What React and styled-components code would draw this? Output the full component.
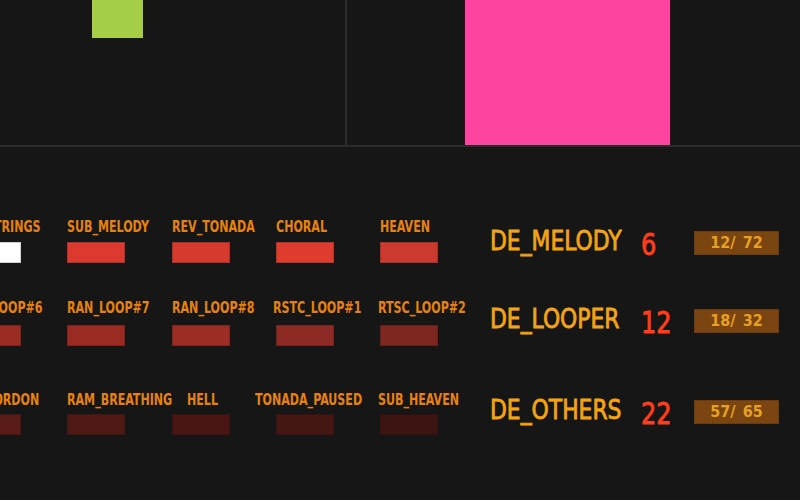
import React from "react";
import styled, { createGlobalStyle } from "styled-components";

const GlobalStyle = createGlobalStyle`
  html, body {
    margin: 0;
    padding: 0;
    background: #161616;
    overflow: hidden;
  }
`;

// slot rows: top offset, gap between label and pad, slots
const rows = [
  {
    top: 72,
    gap: 7,
    slots: [
      { name: "SUB_STRINGS", color: "#ffffff", shift: -8 },
      { name: "SUB_MELODY", color: "#dc3a2e" },
      { name: "REV_TONADA", color: "#d63a2f" },
      { name: "CHORAL", color: "#df3c30" },
      { name: "HEAVEN", color: "#cc3a2f" },
    ],
  },
  {
    top: 37,
    gap: 9,
    slots: [
      { name: "RAN_LOOP#6", color: "#9c2b23", shift: -3 },
      { name: "RAN_LOOP#7", color: "#9a2a22" },
      { name: "RAN_LOOP#8", color: "#9d2c24" },
      { name: "RSTC_LOOP#1", color: "#8d2a24", shift: -3 },
      { name: "RTSC_LOOP#2", color: "#7e2620", shift: -2 },
    ],
  },
  {
    top: 46,
    gap: 6,
    slots: [
      { name: "SUB_BORDON", color: "#5a1c18", shift: -9 },
      { name: "RAM_BREATHING", color: "#4f1a16" },
      { name: "HELL", color: "#491614", shift: 15 },
      { name: "TONADA_PAUSED", color: "#451614", shift: -21 },
      { name: "SUB_HEAVEN", color: "#3c1513", shift: -2 },
    ],
  },
];

const groups = [
  { name: "DE_MELODY", count: 6, used: 12, total: 72, top: 84 },
  { name: "DE_LOOPER", count: 12, used: 18, total: 32, top: 54 },
  { name: "DE_OTHERS", count: 22, used: 57, total: 65, top: 67 },
];

export default function App() {
  return (
    <Screen>
      <GlobalStyle />
      <Meters>
        <MeterPanel>
          <LevelBar $left={92} $width={51} $height={38} $color="#a5cd45" />
        </MeterPanel>
        <MeterPanel $grow>
          <LevelBar $left={118} $width={205} $height={145} $color="#fe449f" />
        </MeterPanel>
      </Meters>
      <Mixer>
        <Matrix>
          {rows.map((row, i) => (
            <SlotRow key={i} $top={row.top}>
              {row.slots.map((s) => (
                <Slot key={s.name}>
                  <SlotLabel $shift={s.shift || 0}>{s.name}</SlotLabel>
                  <SlotBox $gap={row.gap} $color={s.color} />
                </Slot>
              ))}
            </SlotRow>
          ))}
        </Matrix>
        <Summary>
          {groups.map((g) => (
            <GroupRow key={g.name} $top={g.top}>
              <GroupName>
                <Narrow $scale={0.9}>{g.name}</Narrow>
              </GroupName>
              <GroupCount>
                <Narrow $scale={0.86}>{g.count}</Narrow>
              </GroupCount>
              <Counter>
                {g.used}/ {g.total}
              </Counter>
            </GroupRow>
          ))}
        </Summary>
      </Mixer>
    </Screen>
  );
}

const Screen = styled.div`
  width: 800px;
  height: 500px;
  background: #161616;
  font-family: "DejaVu Sans Condensed", "Liberation Sans", sans-serif;
  overflow: hidden;
`;

const Meters = styled.div`
  display: flex;
  height: 145px;
  border-bottom: 2px solid #2c2c2c;
`;

const MeterPanel = styled.div`
  flex: ${(p) => (p.$grow ? 1 : "0 0 345px")};
  display: flex;
  align-items: flex-start;
  border-right: ${(p) => (p.$grow ? "none" : "2px solid #2c2c2c")};
`;

const LevelBar = styled.div`
  margin-left: ${(p) => p.$left}px;
  width: ${(p) => p.$width}px;
  height: ${(p) => p.$height}px;
  background: ${(p) => p.$color};
`;

const Mixer = styled.div`
  display: flex;
  align-items: flex-start;
`;

const Matrix = styled.div`
  display: flex;
  flex-direction: column;
  margin-left: -37px;
  width: 527px;
  flex-shrink: 0;
`;

const SlotRow = styled.div`
  display: flex;
  margin-top: ${(p) => p.$top}px;
`;

const Slot = styled.div`
  width: 104.33px;
  display: flex;
  flex-direction: column;
  align-items: flex-start;
`;

const SlotLabel = styled.div`
  margin-left: ${(p) => p.$shift}px;
  font-size: 16px;
  font-weight: bold;
  line-height: 16px;
  color: #e8820e;
  white-space: nowrap;
  transform: scaleX(0.77);
  transform-origin: left center;
`;

const SlotBox = styled.div`
  margin-top: ${(p) => p.$gap}px;
  width: 58px;
  height: 21px;
  background: ${(p) => p.$color};
  box-shadow: inset 0 0 0 1px rgba(0, 0, 0, 0.18);
`;

const Summary = styled.div`
  display: flex;
  flex-direction: column;
`;

const GroupRow = styled.div`
  display: flex;
  align-items: center;
  height: 24px;
  margin-top: ${(p) => p.$top}px;
`;

const Narrow = styled.span`
  display: inline-block;
  transform: scaleX(${(p) => p.$scale});
  transform-origin: left center;
`;

const GroupName = styled.div`
  width: 151px;
  margin-bottom: 5px;
  font-size: 27px;
  line-height: 28px;
  color: #f4a412;
  -webkit-text-stroke: 0.8px #f4a412;
  white-space: nowrap;
`;

const GroupCount = styled.div`
  width: 53px;
  margin-top: 2px;
  font-size: 31px;
  line-height: 32px;
  color: #ff3d1c;
  -webkit-text-stroke: 0.9px #ff3d1c;
`;

const Counter = styled.div`
  box-sizing: border-box;
  width: 85px;
  height: 24px;
  line-height: 22px;
  text-align: center;
  background: #7b4511;
  border: 1px dotted #5c320a;
  font-size: 16px;
  font-weight: bold;
  color: #e6a024;
  word-spacing: 2px;
`;
